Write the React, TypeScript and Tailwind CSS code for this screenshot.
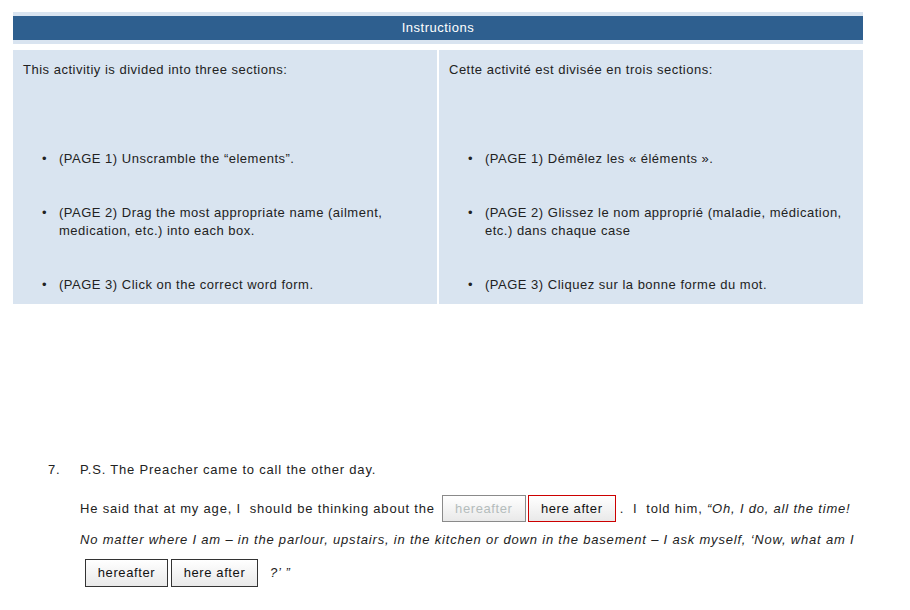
import React from "react";

const font = { fontFamily: '"Liberation Sans", Arial, sans-serif' };

function Bullet({ children }: { children: React.ReactNode }) {
  return (
    <li className="flex mt-[36px] first:mt-0">
      <span className="w-[46px] pl-[29px] shrink-0">•</span>
      <span>{children}</span>
    </li>
  );
}

export default function App() {
  return (
    <div
      className="w-[910px] h-[610px] bg-white text-[#222] text-[13px] leading-[18px] tracking-[0.5px] overflow-hidden"
      style={font}
    >
      <div className="pt-[12px] pl-[13px]">
        <div className="w-[850px]">
          <div className="border-y-4 border-[#d9e4f0] bg-[#2e5f8f] h-[32px] flex items-center justify-center text-white text-[13px]">
            Instructions
          </div>
          <div className="mt-[6px] flex gap-[2px]">
            <div className="w-[424px] bg-[#d9e4f0] pt-[11px] pb-[10px] pl-[10px] h-[254px]">
              <p>This activitiy is divided into three sections:</p>
              <ul className="mt-[71px] -ml-[10px]">
                <Bullet>(PAGE 1) Unscramble the “elements”.</Bullet>
                <Bullet>
                  (PAGE 2) Drag the most appropriate name (ailment,
                  <br />
                  medication, etc.) into each box.
                </Bullet>
                <Bullet>(PAGE 3) Click on the correct word form.</Bullet>
              </ul>
            </div>
            <div className="w-[424px] bg-[#d9e4f0] pt-[11px] pb-[10px] pl-[10px] h-[254px]">
              <p>Cette activité est divisée en trois sections:</p>
              <ul className="mt-[71px] -ml-[10px]">
                <Bullet>(PAGE 1) Démêlez les « éléments ».</Bullet>
                <Bullet>
                  (PAGE 2) Glissez le nom approprié (maladie, médication,
                  <br />
                  etc.) dans chaque case
                </Bullet>
                <Bullet>(PAGE 3) Cliquez sur la bonne forme du mot.</Bullet>
              </ul>
            </div>
          </div>
        </div>
      </div>

      <div className="mt-[157px] flex tracking-[0.8px]">
        <div className="w-[80px] pl-[48px] shrink-0">7.</div>
        <div className="flex flex-col">
          <div className="h-[18px] flex items-center">P.S. The Preacher came to call the other day.</div>
          <div className="mt-[16px] h-[27px] flex items-center whitespace-pre">
            <span className="mr-[7px]">He said that at my age, I  should be thinking about the</span>
            <span className="w-[84px] h-[27px] shrink-0 flex items-center justify-center border border-[#8a8a8a] bg-gradient-to-b from-white to-[#e9e9e9] text-[#b4bcbc] tracking-[0.6px]">
              hereafter
            </span>
            <span className="ml-[2px] w-[88px] h-[27px] shrink-0 flex items-center justify-center border border-[#cc0000] bg-gradient-to-b from-white to-[#e9e9e9] text-[#111] tracking-[0.6px]">
              here after
            </span>
            <span className="ml-[4px]">.  I  told him, </span>
            <span className="italic">“Oh, I do, all the time!</span>
          </div>
          <div className="mt-[9px] h-[18px] flex items-center italic whitespace-nowrap">
            No matter where I am – in the parlour, upstairs, in the kitchen or down in the basement – I ask myself, ‘Now, what am I
          </div>
          <div className="mt-[10px] h-[28px] flex items-center pl-[5px]">
            <span className="w-[83px] h-[28px] shrink-0 flex items-center justify-center border border-[#333] bg-gradient-to-b from-white to-[#e9e9e9] text-[#111] tracking-[0.6px]">
              hereafter
            </span>
            <span className="ml-[3px] w-[87px] h-[28px] shrink-0 flex items-center justify-center border border-[#333] bg-gradient-to-b from-white to-[#e9e9e9] text-[#111] tracking-[0.6px]">
              here after
            </span>
            <span className="ml-[12px] italic">?’ ”</span>
          </div>
        </div>
      </div>
    </div>
  );
}
